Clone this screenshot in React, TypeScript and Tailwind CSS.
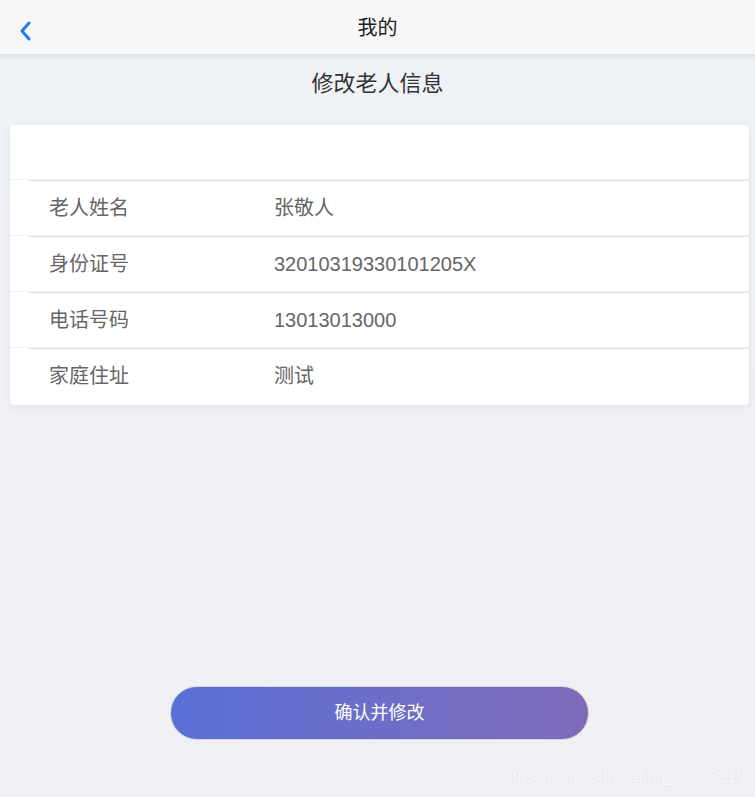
import React from "react";

const rows = [
  { label: "老人姓名", value: "张敬人" },
  { label: "身份证号", value: "32010319330101205X" },
  { label: "电话号码", value: "13013013000" },
  { label: "家庭住址", value: "测试" },
];

const App = () => {
  return (
    <div
      className="relative flex flex-col min-h-screen bg-gradient-to-b from-[#eef2f6] to-[#f0eff4]"
      style={{ fontFamily: '"Liberation Sans", "Noto Sans CJK SC", sans-serif' }}
    >
      {/* header */}
      <div className="relative z-10 flex items-center justify-center h-[54px] bg-[#f7f7f7] shadow-[0_2px_6px_rgba(0,0,0,0.1)]">
        <button className="absolute left-[14px] top-[15px] p-1">
          <svg width="16" height="24" viewBox="0 0 16 24" fill="none">
            <path d="M11 4 L4 12 L11 20" stroke="#1a7ff0" strokeWidth="3" strokeLinecap="round" strokeLinejoin="round" />
          </svg>
        </button>
        <h1 className="text-[20px] text-[#222] pt-[2px]">我的</h1>
      </div>

      {/* page title */}
      <div className="flex items-center justify-center h-[71px]">
        <h2 className="text-[22px] text-[#333] pb-[12px]">修改老人信息</h2>
      </div>

      {/* info card */}
      <div className="ml-[10px] mr-[6px] pb-[2px] bg-white rounded-sm shadow-[0_2px_8px_rgba(0,0,0,0.06)]">
        <div className="h-[54px]" />
        {rows.map((r) => (
          <div key={r.label} className="border-t border-[#f0f0f0]">
            <div className="flex items-center h-[55px] ml-[18px] border-t border-[#e3e3e3] text-[20px] text-[#666]">
              <span className="w-[246px] pl-[21px]">{r.label}</span>
              <span>{r.value}</span>
            </div>
          </div>
        ))}
      </div>

      <div className="flex-1" />

      {/* submit button */}
      <div className="flex justify-center pb-[57px] pl-[4px]">
        <button className="w-[419px] h-[54px] rounded-full border border-[#d4d4dc] bg-gradient-to-r from-[#5a70d6] to-[#7e6bb9] text-white text-[18px]">
          确认并修改
        </button>
      </div>

      {/* watermark */}
      <span className="absolute right-[10px] bottom-[8px] text-[16px] text-white/90 [text-shadow:0_0_1px_rgba(0,0,0,0.15)]">
        https://blog.csdn.net/qq_40303219
      </span>
    </div>
  );
};

export default App;
